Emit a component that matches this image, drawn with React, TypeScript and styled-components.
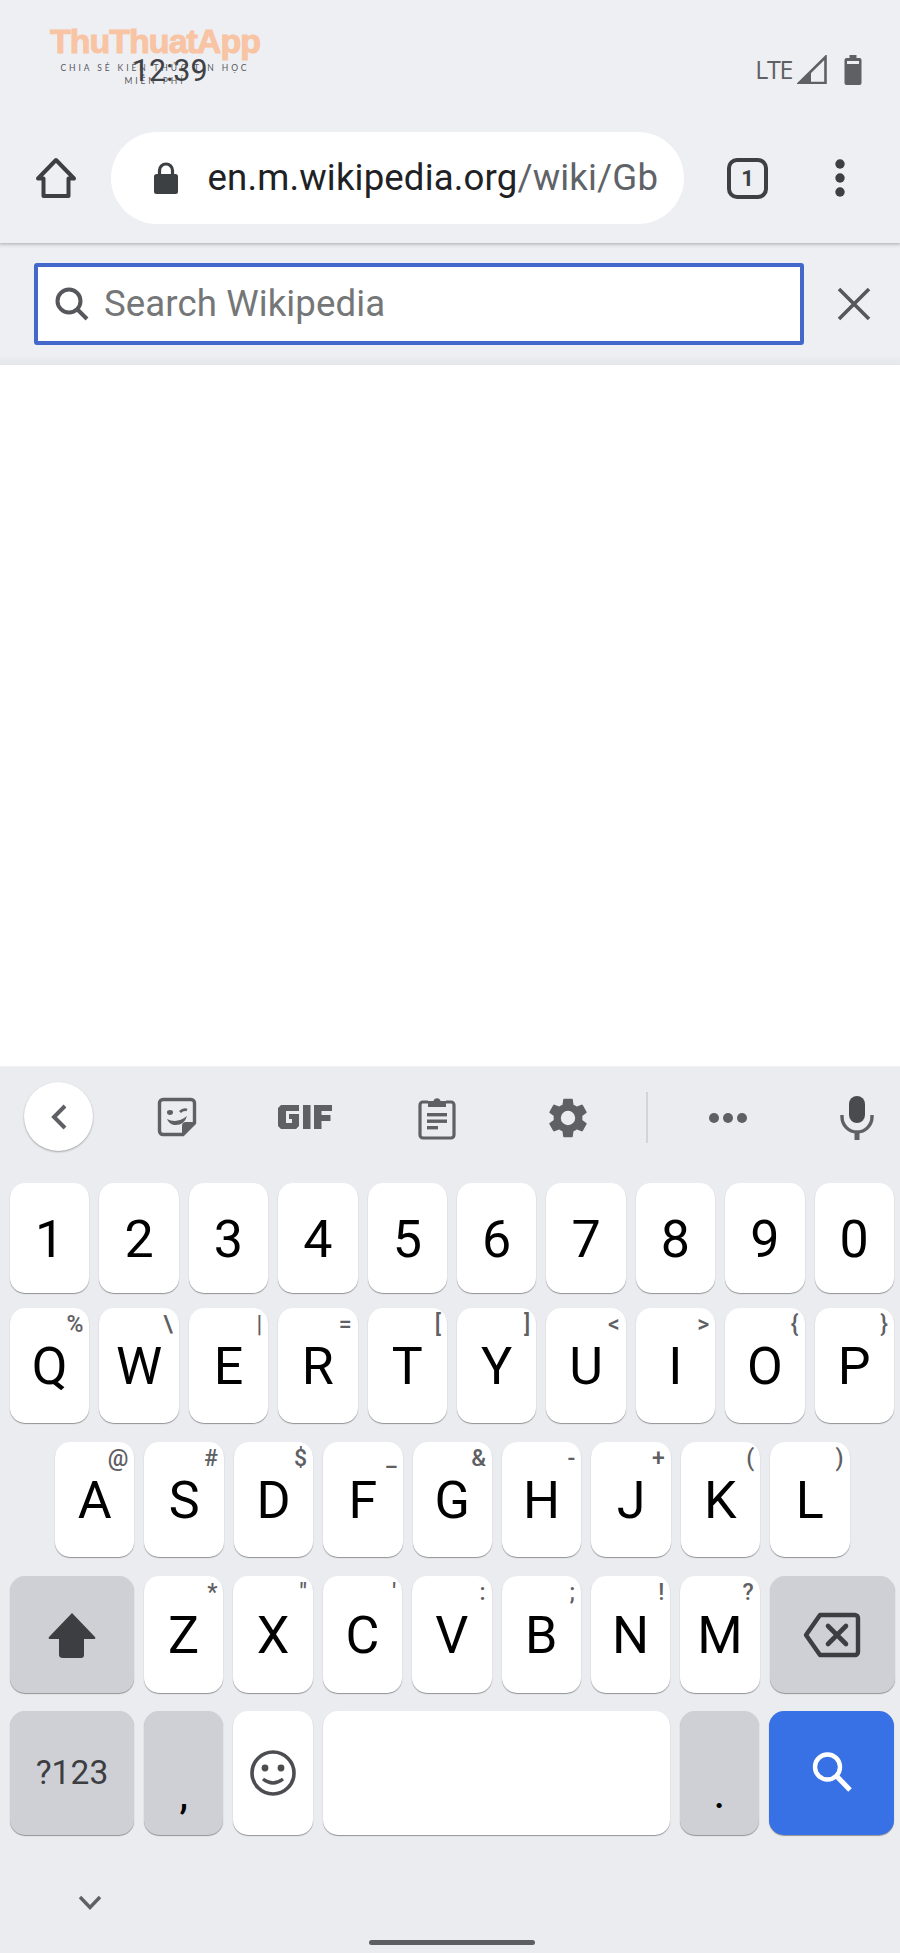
import React from "react";
import styled, { createGlobalStyle } from "styled-components";

const Global = createGlobalStyle`
  html, body { margin: 0; padding: 0; background: #fff; }
  body { font-family: Roboto, "Liberation Sans", sans-serif; }
`;
const Page = styled.div`
  width: 900px; height: 1953px; display: flex; flex-direction: column; overflow: hidden; background: #fff;
`;
const Chrome = styled.header`
  height: 243px; background: #eeeff3; flex: none; display: flex; flex-direction: column; position: relative; z-index: 2;
  box-shadow: 0 1px 3px rgba(0,0,0,.22);
`;
const StatusBar = styled.div`
  height: 132px; flex: none; position: relative; display: flex; align-items: flex-start; justify-content: flex-end; padding: 55px 38px 0 0; box-sizing: border-box;
`;
const Watermark = styled.div`
  position: absolute; left: 50px; top: 25px; width: 210px; display: flex; flex-direction: column; align-items: center;
`;
const WatermarkTitle = styled.div`
  font-family: "Liberation Sans", sans-serif; font-weight: 700; font-size: 34px; line-height: 32px; color: #f8c4a3; letter-spacing: -1px; -webkit-text-stroke: 1px #f8c4a3; white-space: nowrap;
`;
const WatermarkTag = styled.div`
  font-family: Lato, sans-serif; font-size: 8.5px; line-height: 13px; letter-spacing: 2.9px; color: #55575c; text-align: center; margin-top: 5px;
`;
const Clock = styled.div`
  position: absolute; left: 132px; top: 53px; font-size: 30.5px; line-height: 36px; color: #3f4145; letter-spacing: -.1px;
`;
const Lte = styled.span`
  font-size: 25px; line-height: 28px; color: #5f6064; font-family: "Open Sans", sans-serif; letter-spacing: -1.3px; margin-right: 5px;
`;
const Nav = styled.div`
  height: 92px; flex: none; display: flex; align-items: flex-start;
`;
const NavSlot = styled.div<{ $w: number }>`
  width: ${p => p.$w}px; height: 92px; flex: none; display: flex; align-items: center; justify-content: center;
`;
const Omnibox = styled.div`
  width: 573px; height: 92px; border-radius: 46px; background: #fff; flex: none; display: flex; align-items: center; padding-left: 42px; box-sizing: border-box;
`;
const Url = styled.div`
  margin-left: 28.5px; font-size: 36.6px; line-height: 40px; color: #202124; white-space: nowrap; letter-spacing: .15px;
  span { color: #5f6368; }
`;
const TabCount = styled.div`
  width: 41px; height: 41px; box-sizing: border-box; border: 4px solid #3c4043; border-radius: 10px; display: flex; align-items: center; justify-content: center; font-size: 22px; font-weight: 700; color: #3c4043;
`;
const SearchStrip = styled.div`
  height: 122px; flex: none; box-sizing: border-box; display: flex; align-items: flex-start; padding: 20px 0 0 34px; position: relative;
  background: linear-gradient(#e0e1e5, #eeeff3 6px, #eeeff3 112px, #e5e6e9);
`;
const SearchBox = styled.div`
  width: 770px; height: 82px; box-sizing: border-box; border: 4px solid #4468c9; border-radius: 3px; background: #fff; display: flex; align-items: center; padding-left: 17px; flex: none;
`;
const Placeholder = styled.span`
  margin-left: 15px; font-size: 36.6px; color: #747678; letter-spacing: .1px; line-height: 40px;
`;
const CloseSlot = styled.div`
  flex: 1; height: 82px; display: flex; align-items: center; justify-content: center; padding-left: 4px;
`;
const Blank = styled.main`
  flex: 1; background: #fff;
`;
const Keyboard = styled.section`
  height: 886px; flex: none; background: #ebecf0; display: flex; flex-direction: column; box-shadow: 0 -1px 1px rgba(0,0,0,.05); position: relative;
`;
const Toolbar = styled.div`
  height: 116px; flex: none; position: relative;
`;
const ToolIcon = styled.div<{ $x: number; $dy: number }>`
  position: absolute; top: 0; bottom: 0; left: ${p => p.$x}px; width: 0; margin-top: ${p => p.$dy}px; display: flex; align-items: center; justify-content: center;
  svg { flex: none; }
`;
const BackCircle = styled.div`
  position: absolute; left: 24px; top: 15px; width: 69px; height: 69px; border-radius: 50%; background: #fff; box-shadow: 0 1px 2px rgba(0,0,0,.32); display: flex; align-items: center; justify-content: center;
`;
const ToolDivider = styled.div`
  position: absolute; left: 646px; top: 25px; width: 2px; height: 51px; background: #d3d4d8;
`;
const Rows = styled.div`
  display: flex; flex-direction: column; padding: 0 6px 0 10px;
`;
const Row = styled.div<{ $h: number; $mt?: number; $ml?: number }>`
  display: flex; gap: 10px; height: ${p => p.$h}px; margin-top: ${p => p.$mt ?? 0}px; margin-left: ${p => p.$ml ?? 0}px; flex: none;
`;
const Key = styled.div<{ $tone?: "white" | "grey" | "blue"; $w?: number }>`
  position: relative; flex: ${p => (p.$w ? `0 0 ${p.$w}px` : "1 1 0")}; min-width: 0; border-radius: 15px;
  background: ${p => (p.$tone === "grey" ? "#cfd0d5" : p.$tone === "blue" ? "#3871e5" : "#fff")};
  box-shadow: 0 1px 1px rgba(0,0,0,.38);
  display: flex; align-items: center; justify-content: center; color: #000; line-height: 1;
`;
const Letter = styled.span`
  font-size: 52px; line-height: 1; font-weight: 400; padding-top: 3px;
`;
const Hint = styled.span`
  position: absolute; top: 3px; right: 6px; font-size: 23px; line-height: 1.2; color: #5f6064; font-weight: 500;
`;
const Mode = styled.span`
  font-size: 33.5px; color: #3c3e42; letter-spacing: .1px;
`;
const Punct = styled.span`
  position: absolute; left: 0; right: 0; bottom: 21px; text-align: center; font-size: 38px; line-height: 1; font-weight: 500; color: #000;
`;
const BottomBar = styled.div`
  flex: 1; position: relative;
`;
const HomeIndicator = styled.div`
  position: absolute; left: 369px; bottom: 8px; width: 166px; height: 5px; border-radius: 3px; background: #5e5f62;
`;
const HideKb = styled.div`
  position: absolute; left: 78px; top: 60px; display: flex;
`;

const S = "#5f6064";

const numbers = ["1","2","3","4","5","6","7","8","9","0"];
const top = [["Q","%"],["W","\\"],["E","|"],["R","="],["T","["],["Y","]"],["U","<"],["I",">"],["O","{"],["P","}"]];
const mid = [["A","@"],["S","#"],["D","$"],["F","_"],["G","&"],["H","-"],["J","+"],["K","("],["L",")"]];
const low = [["Z","*"],["X","\""],["C","'"],["V",":"],["B",";"],["N","!"],["M","?"]];

const LetterKey = ({ l, h }: { l: string; h: string }) => (
  <Key $w={79.4}><Letter>{l}</Letter><Hint>{h}</Hint></Key>
);

export default function App() {
  return (
    <Page>
      <Global />
      <Chrome>
        <StatusBar>
          <Watermark>
            <WatermarkTitle>ThuThuatApp</WatermarkTitle>
            <WatermarkTag>CHIA SẺ KIẾN THỨC TIN HỌC MIỄN PHÍ</WatermarkTag>
          </Watermark>
          <Clock>12:39</Clock>
          <Lte>LTE</Lte>
          <svg width="30" height="29" viewBox="0 0 30 29" style={{ marginRight: 17 }}>
            <path d="M28.5 2 L28.5 28 L2 28 Z" fill="none" stroke={S} strokeWidth="2.6" />
            <path d="M2 28 L14 16 L14 28 Z" fill={S} />
          </svg>
          <svg width="18" height="30" viewBox="0 0 18 30">
            <path d="M5.5 0h7v3h3a2 2 0 0 1 2 2v23a2 2 0 0 1-2 2H2.5a2 2 0 0 1-2-2V5a2 2 0 0 1 2-2h3z" fill={S} />
            <rect x="3" y="6" width="12" height="3" fill="#eeeff3" />
          </svg>
        </StatusBar>
        <Nav>
          <NavSlot $w={111}>
            <svg width="42" height="42" viewBox="0 0 42 42" fill="none">
              <path d="M21 3 L39 21.5 H33.5 V39 H8.5 V21.5 H3 Z" stroke="#3c4043" strokeWidth="4" strokeLinejoin="round" />
            </svg>
          </NavSlot>
          <Omnibox>
            <svg width="26" height="32" viewBox="0 0 26 32">
              <path d="M6.5 13V8.5a6.5 6.5 0 0 1 13 0V13" fill="none" stroke="#3c4043" strokeWidth="3.2" />
              <rect x="1" y="12" width="24" height="20" rx="2.5" fill="#3c4043" />
            </svg>
            <Url>en.m.wikipedia.org<span>/wiki/Gb</span></Url>
          </Omnibox>
          <NavSlot $w={127}><TabCount>1</TabCount></NavSlot>
          <NavSlot $w={58}>
            <svg width="10" height="38" viewBox="0 0 10 38" fill="#3c4043">
              <circle cx="5" cy="5" r="4.7" /><circle cx="5" cy="19" r="4.7" /><circle cx="5" cy="33" r="4.7" />
            </svg>
          </NavSlot>
        </Nav>
      </Chrome>
      <SearchStrip>
        <SearchBox>
          <svg width="34" height="34" viewBox="0 0 34 34" fill="none">
            <circle cx="14" cy="14" r="11.5" stroke="#55575b" strokeWidth="4" />
            <path d="M22.5 22.5 L32 32" stroke="#55575b" strokeWidth="4" />
          </svg>
          <Placeholder>Search Wikipedia</Placeholder>
        </SearchBox>
        <CloseSlot>
          <svg width="34" height="34" viewBox="0 0 34 34">
            <path d="M2 2 L32 32 M32 2 L2 32" stroke="#55575b" strokeWidth="3.6" />
          </svg>
        </CloseSlot>
      </SearchStrip>
      <Blank />
      <Keyboard>
        <Toolbar>
          <BackCircle>
            <svg width="20" height="28" viewBox="0 0 20 28" fill="none">
              <path d="M16 3 L5 14 L16 25" stroke={S} strokeWidth="4" />
            </svg>
          </BackCircle>
          <ToolIcon $x={177} $dy={-16}>
            <svg width="40" height="40" viewBox="0 0 40 40" fill="none">
              <path d="M6 2.5h28a3.5 3.5 0 0 1 3.5 3.5v20L26 37.5H6A3.5 3.5 0 0 1 2.5 34V6A3.5 3.5 0 0 1 6 2.5z" stroke={S} strokeWidth="3.4" />
              <path d="M37 25 L25 37 V29 a4 4 0 0 1 4-4z" fill={S} />
              <ellipse cx="13" cy="15.5" rx="3" ry="2.4" fill={S} />
              <path d="M23 15 q3.5-3.5 7-2" stroke={S} strokeWidth="2.8" />
              <path d="M10 22 Q20 27 30 19 Q27 29 17 28 Q12 27 10 22z" fill={S} />
            </svg>
          </ToolIcon>
          <ToolIcon $x={305} $dy={-16}>
            <svg width="54" height="24" viewBox="0 0 54 24" fill={S}>
              <path d="M3 0h18v6H8v12h6v-4h-3V9h10v12l-3 3H3l-3-3V3z" />
              <rect x="25" y="0" width="7.5" height="24" />
              <path d="M36 0h18v6H43.5v4h9v6h-9v8H36z" />
            </svg>
          </ToolIcon>
          <ToolIcon $x={437} $dy={-15}>
            <svg width="38" height="44" viewBox="0 0 38 44" fill="none">
              <path d="M10 6H5a3 3 0 0 0-3 3v30a3 3 0 0 0 3 3h28a3 3 0 0 0 3-3V9a3 3 0 0 0-3-3h-5" stroke={S} strokeWidth="3.2" />
              <path d="M10 11V5h5.5a3.6 3.6 0 0 1 7 0H28v6z" fill={S} />
              <rect x="9" y="17" width="20" height="3.4" fill={S} /><rect x="9" y="23.5" width="20" height="3.4" fill={S} /><rect x="9" y="30" width="11" height="3.4" fill={S} />
            </svg>
          </ToolIcon>
          <ToolIcon $x={568} $dy={-14}>
            <svg width="40" height="42" viewBox="0 0 24 24" fill={S} style={{ transform: "scale(1.2)" }}>
              <path d="M19.14 12.94c.04-.3.06-.61.06-.94s-.02-.64-.07-.94l2.03-1.58a.49.49 0 0 0 .12-.61l-1.92-3.32a.49.49 0 0 0-.59-.22l-2.39.96a7 7 0 0 0-1.62-.94l-.36-2.54a.48.48 0 0 0-.48-.41h-3.84a.48.48 0 0 0-.47.41l-.36 2.54c-.59.24-1.13.57-1.62.94l-2.39-.96a.49.49 0 0 0-.59.22L2.74 8.87a.47.47 0 0 0 .12.61l2.03 1.58c-.05.3-.09.63-.09.94s.02.64.07.94l-2.03 1.58a.49.49 0 0 0-.12.61l1.92 3.32c.12.22.37.29.59.22l2.39-.96c.5.38 1.03.7 1.62.94l.36 2.54c.05.24.24.41.48.41h3.84c.24 0 .44-.17.47-.41l.36-2.54c.59-.24 1.13-.56 1.62-.94l2.39.96c.22.08.47 0 .59-.22l1.92-3.32a.47.47 0 0 0-.12-.61l-2.01-1.58zM12 15.6a3.6 3.6 0 1 1 0-7.2 3.6 3.6 0 0 1 0 7.2z" />
            </svg>
          </ToolIcon>
          <ToolDivider />
          <ToolIcon $x={728} $dy={-15}>
            <svg width="40" height="12" viewBox="0 0 40 12" fill={S}>
              <circle cx="6" cy="6" r="5" /><circle cx="20" cy="6" r="5" /><circle cx="34" cy="6" r="5" />
            </svg>
          </ToolIcon>
          <ToolIcon $x={857} $dy={-15}>
            <svg width="34" height="45" viewBox="0 0 34 45" fill="none">
              <rect x="9" y="1" width="16" height="27" rx="8" fill="#4a4b4f" />
              <path d="M2 20v2a15 15 0 0 0 30 0v-2" stroke={S} strokeWidth="3.4" />
              <rect x="14.5" y="36" width="5" height="9" fill={S} />
            </svg>
          </ToolIcon>
        </Toolbar>
        <Rows>
          <Row $h={110}>
            {numbers.map(n => <Key key={n} $w={79.4}><Letter>{n}</Letter></Key>)}
          </Row>
          <Row $h={115} $mt={15}>
            {top.map(([l, h]) => <LetterKey key={l} l={l} h={h} />)}
          </Row>
          <Row $h={115} $mt={19} $ml={45}>
            {mid.map(([l, h]) => <LetterKey key={l} l={l} h={h} />)}
          </Row>
          <Row $h={117} $mt={19}>
            <Key $tone="grey" $w={124}>
              <svg width="50" height="46" viewBox="0 0 50 46">
                <path d="M25 1 L48 25 Q49 27 47 27 H37 V43 Q37 46 34 46 H16 Q12 46 12 43 V27 H3 Q1 27 2 25 Z" fill="#3c3e42" />
              </svg>
            </Key>
            {low.map(([l, h]) => <LetterKey key={l} l={l} h={h} />)}
            <Key $tone="grey" $w={125}>
              <svg width="58" height="46" viewBox="0 0 58 46" fill="none">
                <path d="M17 3 H52 a3 3 0 0 1 3 3 V40 a3 3 0 0 1-3 3 H17 L3 23 Z" stroke="#3c3e42" strokeWidth="4.4" strokeLinejoin="round" />
                <path d="M25 14 L43 32 M43 14 L25 32" stroke="#3c3e42" strokeWidth="4.6" strokeLinecap="round" />
              </svg>
            </Key>
          </Row>
          <Row $h={124} $mt={18}>
            <Key $tone="grey" $w={124}><Mode>?123</Mode></Key>
            <Key $tone="grey" $w={79.4}><Punct>,</Punct></Key>
            <Key $w={79.4}>
              <svg width="46" height="46" viewBox="0 0 46 46" fill="none">
                <circle cx="23" cy="23" r="21" stroke="#4c4d51" strokeWidth="3.6" />
                <circle cx="15" cy="18" r="3.4" fill="#4c4d51" /><circle cx="31" cy="18" r="3.4" fill="#4c4d51" />
                <path d="M13 29 Q23 37 33 29" stroke="#4c4d51" strokeWidth="3.4" />
              </svg>
            </Key>
            <Key />
            <Key $tone="grey" $w={79.4}><Punct>.</Punct></Key>
            <Key $tone="blue" $w={125}>
              <svg width="42" height="42" viewBox="0 0 42 42" fill="none">
                <circle cx="16.5" cy="15" r="12.5" stroke="#fff" strokeWidth="4.4" />
                <path d="M26 24.5 L39 38" stroke="#fff" strokeWidth="5" />
              </svg>
            </Key>
          </Row>
        </Rows>
        <BottomBar>
          <HideKb>
            <svg width="24" height="16" viewBox="0 0 24 16" fill="none">
              <path d="M2 2 L12 12.5 L22 2" stroke={S} strokeWidth="3.4" />
            </svg>
          </HideKb>
          <HomeIndicator />
        </BottomBar>
      </Keyboard>
    </Page>
  );
}
